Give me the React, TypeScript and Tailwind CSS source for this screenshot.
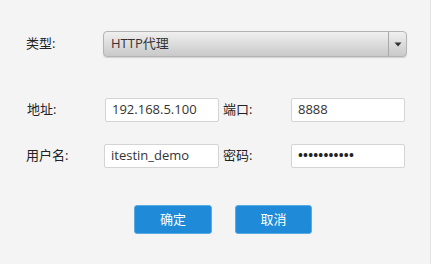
import React from "react";

const font = { fontFamily: '"Open Sans", "Noto Sans CJK SC", sans-serif' };

const Field = ({ value, width }: { value: string; width: string }) => (
  <div
    className={`${width} h-[24px] flex items-center pl-[6px] bg-white border border-[#d4d4d4] rounded-[2px] text-[13px] text-[#333]`}
  >
    {value}
  </div>
);

const App: React.FunctionComponent = () => {
  return (
    <div className="w-[434px] h-[264px] flex bg-white" style={font}>
      <div className="w-[431px] h-full bg-[#f4f4f4] border-r border-[#e2e2e2] flex flex-col pl-[26px] pt-[31px] text-[13px] text-[#222]">
        <div className="flex items-center h-[26px]">
          <span className="w-[77px]">类型:</span>
          <div className="w-[304px] h-[26px] flex items-stretch rounded-[4px] border border-[#b4b4b4] bg-gradient-to-b from-[#f0f0f0] to-[#c9c9c9] shadow-[0_1px_1px_rgba(0,0,0,0.15)]">
            <div className="flex-1 flex items-center pl-[7px] text-[#333]">HTTP代理</div>
            <div className="w-[18px] border-l border-[#a8a8a8] flex items-center justify-center">
              <svg width="8" height="5" viewBox="0 0 8 5">
                <path d="M0.5 0.5 L7.5 0.5 L4 4.5 Z" fill="#333" />
              </svg>
            </div>
          </div>
        </div>

        <div className="flex items-center h-[24px] mt-[41px]">
          <span className="w-[79px] pl-px">地址:</span>
          <Field value="192.168.5.100" width="w-[114px]" />
          <span className="w-[72px] pl-[4px]">端口:</span>
          <Field value="8888" width="w-[114px]" />
        </div>

        <div className="flex items-center h-[24px] mt-[22px]">
          <span className="w-[78px]">用户名:</span>
          <Field value="itestin_demo" width="w-[115px]" />
          <span className="w-[72px] pl-[4px]">密码:</span>
          <div className="w-[114px] h-[24px] flex items-center pl-[6px] bg-white border border-[#d4d4d4] rounded-[2px] text-[13px] text-[#222] tracking-[0.2px] font-bold">
            •••••••••••
          </div>
        </div>

        <div className="flex gap-[23px] ml-[108px] mt-[37px]">
          <button className="w-[78px] h-[29px] rounded-[3px] bg-[#1e8ad8] border border-[#5aaae4] text-white text-[13px]">
            确定
          </button>
          <button className="w-[77px] h-[29px] rounded-[3px] bg-[#1e8ad8] border border-[#5aaae4] text-white text-[13px]">
            取消
          </button>
        </div>
      </div>
    </div>
  );
};

export default App;
